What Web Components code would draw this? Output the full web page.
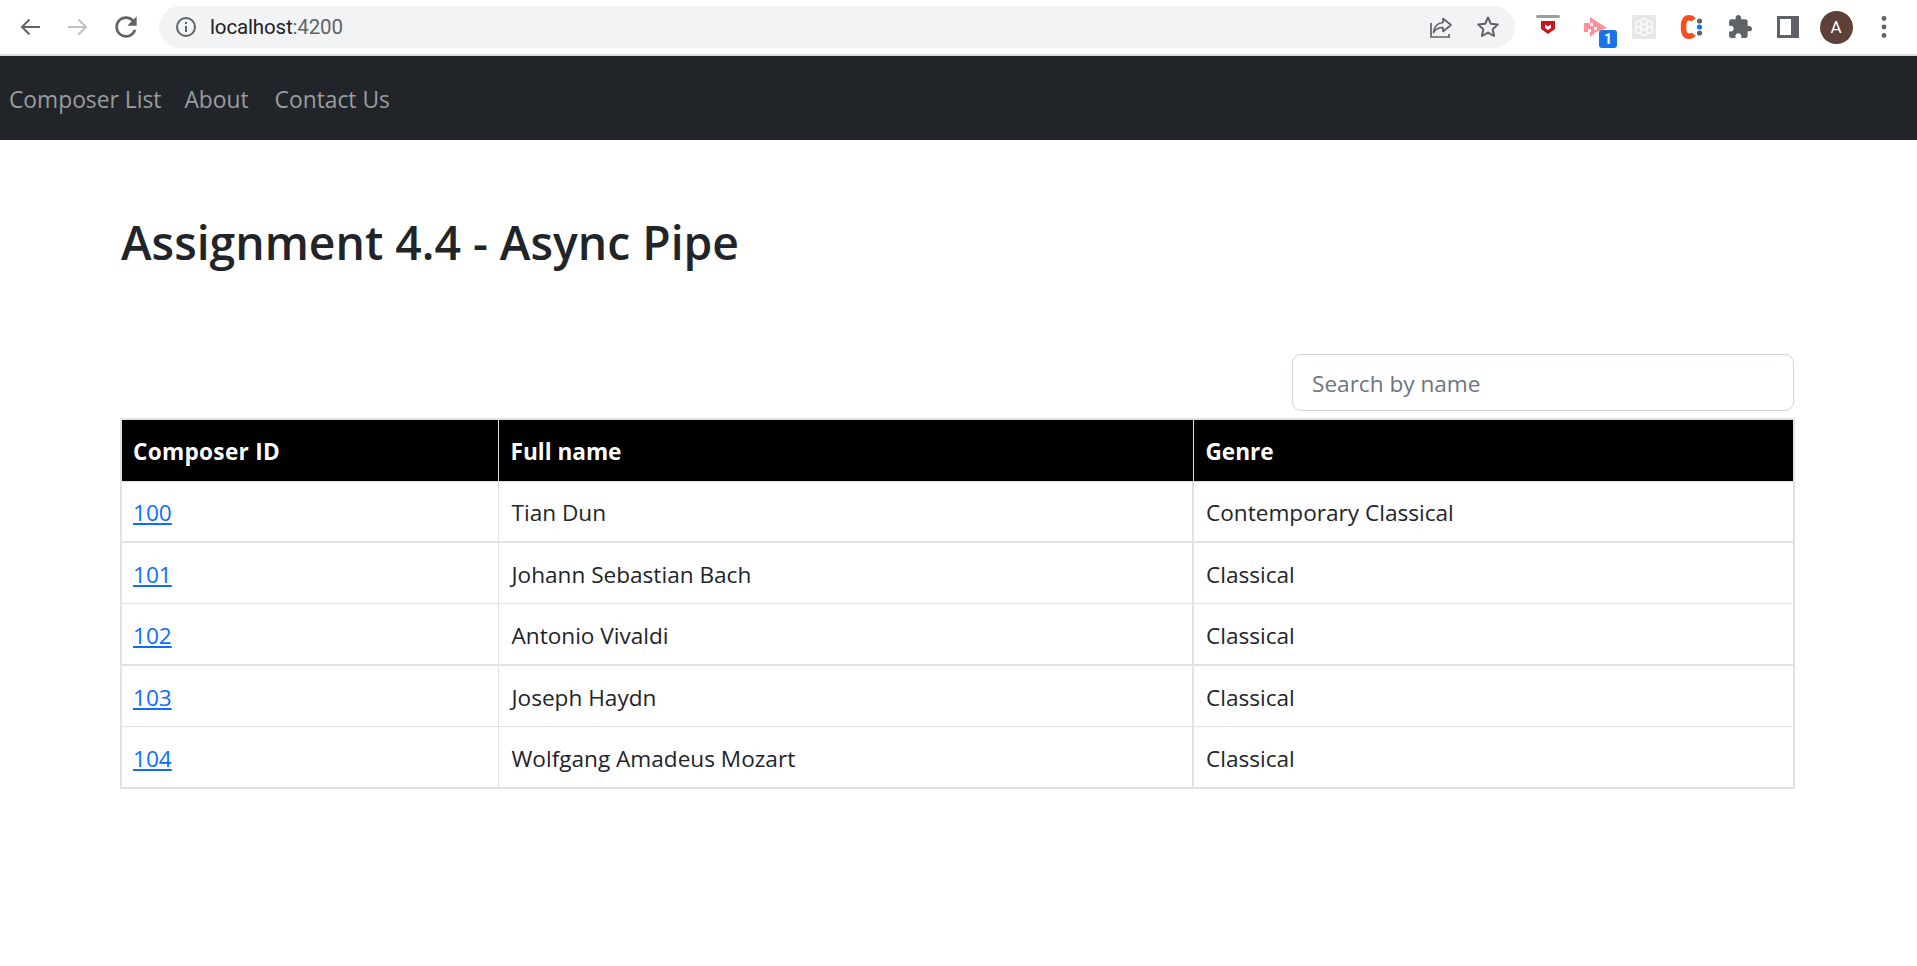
<!DOCTYPE html>
<html lang="en">
<head>
<meta charset="utf-8">
<title>Assignment 4.4 - Async Pipe</title>
<style>
html,body{margin:0;padding:0;background:#fff;height:100%;overflow:hidden}
body{font-family:"Open Sans","Noto Sans","Liberation Sans",sans-serif;color:#212529}
</style>
</head>
<body>
<app-root></app-root>
<script>
class BrowserBar extends HTMLElement{
  constructor(){super();this.attachShadow({mode:'open'}).innerHTML=`
  <style>
  :host{display:flex;align-items:center;height:54px;box-sizing:content-box;border-bottom:2px solid #dadce0;background:#fff;font-family:"Open Sans",sans-serif}
  .nav{display:flex;margin-left:18px;gap:24px;width:120px}
  svg{display:block;flex:none}
  .omni{display:flex;align-items:center;margin-left:21px;width:1356px;height:42px;border-radius:21px;background:#f1f3f4;box-sizing:border-box;padding:0 15px}
  .url{margin-left:12px;font:20.500px/42px Roboto,sans-serif;color:#202124;letter-spacing:-.15px;flex:1}
  .url span{color:#5f6368}
  .omni-r{display:flex;gap:23px}
  .ext{display:flex;align-items:center;margin-left:9px;gap:0}
  .slot{position:relative;width:48px;height:54px;display:flex;align-items:center;justify-content:center}
  .badge{position:absolute;left:27px;top:30px;width:18px;height:18px;border-radius:3px;background:#1a73e8;color:#fff;font:700 14px/18px Roboto,sans-serif;text-align:center}
  .avatar{width:33px;height:33px;border-radius:50%;background:#5d4037;color:#fff;font:17px/33px Roboto,sans-serif;text-align:center}
  </style>
  <div class="nav">
    <svg width="24" height="24" viewBox="0 0 24 24" fill="none" stroke="#5f6368" stroke-width="2"><path d="M22 12H4M11.500 4.500 4 12l7.500 7.500"/></svg>
    <svg width="24" height="24" viewBox="0 0 24 24" fill="none" stroke="#bdc1c6" stroke-width="2"><path d="M2 12h18M12.500 4.500 20 12l-7.500 7.500"/></svg>
    <svg width="24" height="24" viewBox="3 3 18 18" fill="#5f6368"><path d="M17.650 6.350C16.200 4.900 14.210 4 12 4c-4.420 0-7.990 3.580-7.990 8s3.570 8 7.990 8c3.730 0 6.840-2.550 7.730-6h-2.080c-.82 2.330-3.040 4-5.650 4-3.310 0-6-2.690-6-6s2.690-6 6-6c1.660 0 3.140.69 4.220 1.780L13 11h7V4l-2.350 2.350z"/></svg>
  </div>
  <div class="omni">
    <svg width="24" height="24" viewBox="0 0 24 24" fill="none" stroke="#5f6368" stroke-width="2"><circle cx="12" cy="12" r="9"/><path d="M12 11v6M12 7v2"/></svg>
    <div class="url">localhost<span>:4200</span></div>
    <div class="omni-r">
      <svg width="24" height="24" viewBox="0 0 24 24" fill="none" stroke="#5f6368" stroke-width="1.700"><path d="M14 3.500 22 10l-8 6.500v-4c-4.500 0-7.500 1.500-9.500 5 .5-5.500 4-9.500 9.500-10z" stroke-linejoin="round"/><path d="M2 8v14h18v-3"/></svg>
      <svg width="24" height="24" viewBox="0 0 24 24" fill="none" stroke="#5f6368" stroke-width="2"><path d="M12 2.500l2.900 6.300 6.900.8-5.100 4.600 1.400 6.800L12 17.600 5.900 21l1.400-6.800-5.100-4.600 6.900-.8z" stroke-linejoin="round"/></svg>
    </div>
  </div>
  <div class="ext">
    <div class="slot"><svg width="24" height="24" viewBox="0 0 24 24"><rect y="0" width="24" height="3" rx="1.500" fill="#9e9e9e"/><path d="M5 6h14v8l-7 5-7-5z" fill="#c8161d"/><path d="M9 9.500l3 2 3-2v3.500l-3 2-3-2z" fill="#fff"/></svg></div>
    <div class="slot"><svg width="24" height="20" viewBox="0 0 24 20"><path d="M6 0 23 11 12 15 6 20V15H0V6H6z" fill="#ff8f96"/><path d="M6 6h3v3H6zM10 10h3v3h-3zM4 12h3v3H4z" fill="#fff"/></svg><div class="badge">1</div></div>
    <div class="slot"><svg width="24" height="24" viewBox="0 0 24 24"><rect width="24" height="24" rx="2" fill="#e6e6e6"/><g fill="none" stroke="#fafafa" stroke-width="1.500"><circle cx="12" cy="12" r="3"/><circle cx="12" cy="6.500" r="3"/><circle cx="12" cy="17.500" r="3"/><circle cx="6.500" cy="9" r="3"/><circle cx="17.500" cy="9" r="3"/><circle cx="6.500" cy="15" r="3"/><circle cx="17.500" cy="15" r="3"/></g></svg></div>
    <div class="slot"><svg width="26" height="24" viewBox="0 0 26 24"><path d="M14.500 5C13.500 3.500 12 2.800 10 2.800 6.500 2.800 4.500 5.500 4.500 12s2 9.200 5.500 9.200c2 0 3.500-.7 4.500-2.200" fill="none" stroke="#f4511e" stroke-width="5.500"/><circle cx="20.500" cy="6" r="2.600" fill="#5f6368"/><circle cx="20.500" cy="12" r="2.600" fill="#1a73e8"/><circle cx="20.500" cy="18" r="2.600" fill="#5f6368"/></svg></div>
    <div class="slot"><svg width="24" height="24" viewBox="1 1 22 22" fill="#5f6368"><path d="M20.500 11H19V7c0-1.100-.9-2-2-2h-4V3.500C13 2.120 11.880 1 10.500 1S8 2.120 8 3.500V5H4c-1.100 0-1.990.9-1.990 2v3.800H3.500c1.490 0 2.700 1.210 2.700 2.700s-1.210 2.700-2.700 2.700H2V20c0 1.100.9 2 2 2h3.800v-1.500c0-1.490 1.210-2.700 2.700-2.700 1.490 0 2.700 1.210 2.700 2.700V22H17c1.100 0 2-.9 2-2v-4h1.500c1.380 0 2.500-1.120 2.500-2.500S21.880 11 20.500 11z"/></svg></div>
    <div class="slot"><svg width="22" height="22" viewBox="0 0 22 22"><path fill-rule="evenodd" d="M0 0h22v22H0zM3 3v16h11V3z" fill="#5f6368"/></svg></div>
    <div class="slot"><div class="avatar">A</div></div>
    <div class="slot"><svg width="6" height="24" viewBox="0 0 6 24" fill="#5f6368"><circle cx="3" cy="3.500" r="2.400"/><circle cx="3" cy="12" r="2.400"/><circle cx="3" cy="20.500" r="2.400"/></svg></div>
  </div>`;}
}
class NavBar extends HTMLElement{
  constructor(){super();this.attachShadow({mode:'open'}).innerHTML=`
  <style>
  :host{display:flex;align-items:center;height:84px;box-sizing:border-box;background:#212529;padding:4px 0 0 9px;gap:23px;font-size:22.800px;color:#9a9c9e}
  ::slotted(nav-link:last-child){margin-left:3px}
  </style><slot></slot>`;}
}
class NavLink extends HTMLElement{
  constructor(){super();this.attachShadow({mode:'open'}).innerHTML=`<style>:host{display:block;line-height:36px;color:inherit}</style><slot></slot>`;}
}
class PageTitle extends HTMLElement{
  constructor(){super();this.attachShadow({mode:'open'}).innerHTML=`
  <style>:host{display:block;font-size:46.300px;font-weight:600;line-height:56px;color:#212529;padding:75px 0 0 121px}</style><slot></slot>`;}
}
class SearchBox extends HTMLElement{
  constructor(){super();this.attachShadow({mode:'open'}).innerHTML=`
  <style>
  :host{display:flex;justify-content:flex-end;margin:83px 123px 7px 0}
  input{width:502px;height:57px;box-sizing:border-box;border:1.500px solid #ced4da;border-radius:9px;padding:2px 19px 0;font:22.600px "Open Sans",sans-serif;color:#212529;outline:none;background:#fff}
  input::placeholder{color:#6c757d;opacity:1}
  </style><input type="text" placeholder="Search by name">`;}
}
class ComposerTable extends HTMLElement{
  constructor(){super();
    const rows=[[100,'Tian Dun','Contemporary Classical'],[101,'Johann Sebastian Bach','Classical'],[102,'Antonio Vivaldi','Classical'],[103,'Joseph Haydn','Classical'],[104,'Wolfgang Amadeus Mozart','Classical']];
    this.attachShadow({mode:'open'}).innerHTML=`
  <style>
  :host{display:block;margin:0 122px 0 120px;font-size:22.600px}
  table{border-collapse:collapse;table-layout:fixed;width:100%;border:2px solid #dee2e6;color:#212529}
  th,td{padding:2px 12px 0;text-align:left;box-sizing:border-box;white-space:nowrap}
  th:first-child,td:first-child{padding-left:11px}
  th:first-child{letter-spacing:.3px}
  td:nth-child(2){padding-left:13px}
  th{background:#000;color:#fff;height:62px;font-weight:700;border-left:1px solid #dee2e6;border-bottom:1px solid #dee2e6}
  td{height:61.400px;border-left:1px solid #dee2e6;border-bottom:1px solid #dee2e6}
  th:first-child,td:first-child{border-left:none}
  td:last-child{border-left-width:2px}
  tbody tr:nth-child(1) td,tbody tr:nth-child(3) td{border-bottom-width:2px}
  a{color:#0d6efd;text-decoration:underline}
  </style>
  <table>
    <colgroup><col style="width:377px"><col style="width:695px"><col></colgroup>
    <thead><tr><th>Composer ID</th><th>Full name</th><th>Genre</th></tr></thead>
    <tbody>${rows.map(r=>`<tr><td><a href="#">${r[0]}</a></td><td>${r[1]}</td><td>${r[2]}</td></tr>`).join('')}</tbody>
  </table>`;}
}
class AppRoot extends HTMLElement{
  constructor(){super();this.attachShadow({mode:'open'}).innerHTML=`
  <style>:host{display:block}</style>
  <browser-bar></browser-bar>
  <nav-bar><nav-link>Composer List</nav-link><nav-link>About</nav-link><nav-link>Contact Us</nav-link></nav-bar>
  <page-title>Assignment 4.4 - Async Pipe</page-title>
  <search-box></search-box>
  <composer-table></composer-table>`;}
}
customElements.define('browser-bar',BrowserBar);
customElements.define('nav-bar',NavBar);
customElements.define('nav-link',NavLink);
customElements.define('page-title',PageTitle);
customElements.define('search-box',SearchBox);
customElements.define('composer-table',ComposerTable);
customElements.define('app-root',AppRoot);
</script>
</body>
</html>
